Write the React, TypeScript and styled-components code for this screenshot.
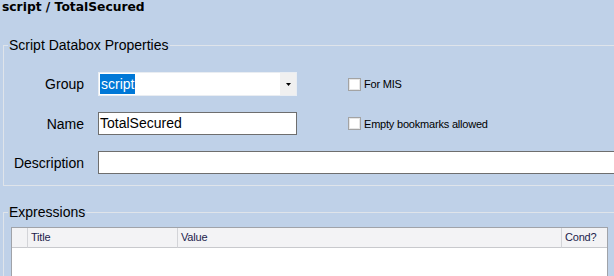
import React from "react";
import styled, { createGlobalStyle } from "styled-components";

const GlobalStyle = createGlobalStyle`
  html, body { margin: 0; padding: 0; background: #bfd1e8; }
  body { font-family: "Liberation Sans", Arial, sans-serif; }
  * { box-sizing: border-box; }
`;

const Page = styled.div`
  width: 614px;
  height: 276px;
  overflow: hidden;
  background: #bfd1e8;
  color: #000;
`;

const Title = styled.div`
  font-family: "DejaVu Sans", Verdana, sans-serif;
  font-weight: bold;
  font-size: 12.3px;
  line-height: 15px;
  height: 15px;
  padding-left: 2px;
  color: #000;
`;

const Group = styled.fieldset<{ $top: number; $pad: string }>`
  margin: ${(p) => p.$top}px 0 0 3px;
  padding: ${(p) => p.$pad};
  border: 1px solid #dfe4ea;
  width: 720px;
  min-width: 0;
`;

const Legend = styled.legend`
  font-size: 14px;
  line-height: 16px;
  padding: 0 1px;
  margin-left: 4px;
  color: #000;
`;

const Form = styled.div`
  display: grid;
  grid-template-columns: 94px 199px 1fr;
  grid-template-rows: 24px 23px 23px;
  row-gap: 16px;
  align-items: center;
`;

const Label = styled.div`
  font-size: 14px;
  text-align: right;
  padding-right: 14px;
`;

const Combo = styled.div`
  width: 199px;
  height: 24px;
  background: #fff;
  border: 1px solid #e9edf2;
  display: flex;
  align-items: center;
  padding-left: 1px;
`;

const Selected = styled.span`
  background: #0078d7;
  color: #fff;
  font-size: 14px;
  line-height: 20px;
  height: 20px;
  padding: 0 1px;
`;

const DropButton = styled.div`
  margin-left: auto;
  width: 16px;
  height: 22px;
  background: #f0f0f0;
  display: flex;
  align-items: center;
  justify-content: center;
`;

const TextBox = styled.div<{ $span?: boolean }>`
  height: 23px;
  background: #fff;
  border: 1px solid #6e6e6e;
  font-size: 14px;
  line-height: 21px;
  padding-left: 1px;
  ${(p) => (p.$span ? "grid-column: 2 / -1;" : "width: 199px;")}
`;

const CheckCell = styled.label`
  display: flex;
  align-items: center;
  padding-left: 51px;
`;

const Box = styled.span`
  width: 13px;
  height: 13px;
  border: 1px solid #a3a3a3;
  background: #fff;
  box-shadow: inset 0 0 0 1px #e6e6e6;
`;

const CheckText = styled.span`
  margin-left: 3px;
  font-size: 11px;
  letter-spacing: -0.2px;
  color: #000;
`;

const Table = styled.div`
  margin-left: 7px;
  width: 597px;
  height: 200px;
  background: #fff;
  border: 1px solid #a0a3a9;
`;

const HeaderRow = styled.div`
  display: grid;
  grid-template-columns: 16px 150px 384px 45px;
`;

const HeaderCell = styled.div<{ $last?: boolean }>`
  height: 20px;
  background: #f3f3f5;
  border-bottom: 1px solid #c8c9cd;
  border-right: ${(p) => (p.$last ? "none" : "1px solid #d3d4d8")};
  font-size: 11px;
  letter-spacing: -0.2px;
  line-height: 19px;
  padding-left: 3px;
  color: #1c1c4c;
`;

export default function App() {
  return (
    <Page>
      <GlobalStyle />
      <Title>script / TotalSecured</Title>
      <Group $top={22} $pad="19px 0 11px 0">
        <Legend>Script Databox Properties</Legend>
        <Form>
          <Label>Group</Label>
          <Combo>
            <Selected>script</Selected>
            <DropButton>
              <svg width="5" height="3" viewBox="0 0 5 3">
                <polygon points="0,0 5,0 2.5,3" fill="#000" />
              </svg>
            </DropButton>
          </Combo>
          <CheckCell>
            <Box />
            <CheckText>For MIS</CheckText>
          </CheckCell>
          <Label>Name</Label>
          <TextBox>TotalSecured</TextBox>
          <CheckCell>
            <Box />
            <CheckText>Empty bookmarks allowed</CheckText>
          </CheckCell>
          <Label>Description</Label>
          <TextBox $span />
        </Form>
      </Group>
      <Group $top={18} $pad="7px 0 0 0">
        <Legend>Expressions</Legend>
        <Table>
          <HeaderRow>
            <HeaderCell />
            <HeaderCell>Title</HeaderCell>
            <HeaderCell>Value</HeaderCell>
            <HeaderCell $last>Cond?</HeaderCell>
          </HeaderRow>
        </Table>
      </Group>
    </Page>
  );
}
